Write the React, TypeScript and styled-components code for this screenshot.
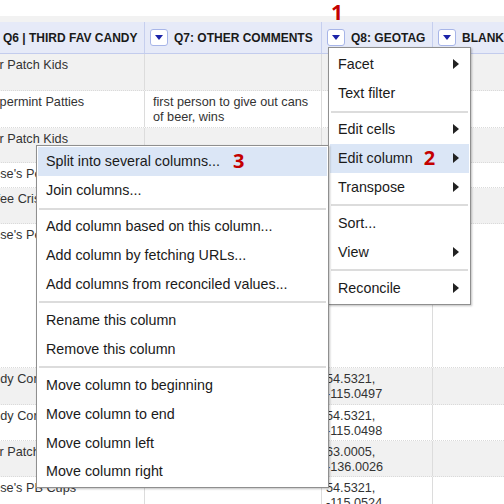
import React from "react";
import styled, { createGlobalStyle } from "styled-components";

const GlobalStyle = createGlobalStyle`
  html, body { margin: 0; padding: 0; background: #fff; }
  body { font-family: "Liberation Sans", Arial, sans-serif; overflow: hidden; }
`;

const Page = styled.div`
  position: relative;
  width: 504px;
  height: 504px;
  overflow: hidden;
  background: #fff;
`;

const TopGap = styled.div`
  height: 16px;
`;

const TopStrip = styled.div`
  height: 6px;
  background: #f2f2f2;
`;

const COLS = "171px 177px 111px 201px";

const Table = styled.div`
  margin-left: -26px;
  width: 660px;
`;

const HeaderRow = styled.div`
  display: grid;
  grid-template-columns: ${COLS};
  height: 31px;
  background: #e6eaf8;
  border-bottom: 1px solid #c3cced;
`;

const HeaderCell = styled.div`
  display: flex;
  align-items: center;
  gap: 6px;
  padding-left: 5px;
  border-right: 1px solid #c6cfee;
  overflow: hidden;
  white-space: nowrap;
`;

const DropButton = styled.span`
  flex: none;
  width: 18px;
  height: 17px;
  box-sizing: border-box;
  border: 1px solid #a7b5e8;
  border-radius: 3px;
  background: #fff;
  display: flex;
  align-items: center;
  justify-content: center;
  &::after {
    content: "";
    border-left: 4px solid transparent;
    border-right: 4px solid transparent;
    border-top: 5px solid #1b23a8;
  }
`;

const HeaderLabel = styled.span`
  font-size: 12px;
  font-weight: bold;
  color: #1a1a1a;
`;

const Row = styled.div<{ $h: number; $odd: boolean }>`
  display: grid;
  grid-template-columns: ${COLS};
  height: ${(p) => p.$h}px;
  box-sizing: border-box;
  background: ${(p) => (p.$odd ? "#f1f1f1" : "#fff")};
  border-bottom: 1px dotted #dadada;
`;

const Cell = styled.div<{ $pl: number; $pr: number }>`
  padding: 4px ${(p) => p.$pr}px 0 ${(p) => p.$pl}px;
  border-right: 1px solid #dcdcdc;
  font-size: 12.7px;
  line-height: 14.5px;
  color: #333;
  white-space: pre-line;
  overflow: hidden;
`;

const Mark = styled.span<{ $gap?: number }>`
  font-family: "Open Sans", "DejaVu Sans", sans-serif;
  font-weight: 700;
  font-size: 20px;
  line-height: 1;
  color: #c40000;
  margin-left: ${(p) => p.$gap ?? 0}px;
`;

const FloatMark = styled(Mark)`
  position: absolute;
  left: 331px;
  top: 2px;
  font-size: 21px;
`;

const Menu = styled.div<{ $left: number; $top: number; $width: number; $padTop: number }>`
  position: absolute;
  left: ${(p) => p.$left}px;
  top: ${(p) => p.$top}px;
  width: ${(p) => p.$width}px;
  box-sizing: border-box;
  background: #fff;
  border: 1px solid #8f8f8f;
  box-shadow: 1px 1px 2px rgba(0, 0, 0, 0.25);
  padding: ${(p) => p.$padTop}px 1px 1px;
  font-size: 14.3px;
  color: #1a1a1a;
`;

const Item = styled.div<{ $active?: boolean }>`
  display: flex;
  align-items: center;
  height: 28.75px;
  padding: 0 10px 0 8px;
  background: ${(p) => (p.$active ? "#dbe6f6" : "transparent")};
  white-space: nowrap;
`;

const Arrow = styled.span`
  margin-left: auto;
  width: 0;
  height: 0;
  border-left: 6px solid #222;
  border-top: 5px solid transparent;
  border-bottom: 5px solid transparent;
`;

const Sep = styled.div`
  height: 2px;
  background: #dcdcdc;
  margin: 3px 1px 2.5px;
`;

type RowData = { h: number; c1: string; c2?: string; c3?: string };

const rows: RowData[] = [
  { h: 37, c1: "Sour Patch Kids" },
  { h: 37, c1: "Peppermint Patties", c2: "first person to give out cans of beer, wins" },
  { h: 35, c1: "Sour Patch Kids" },
  { h: 25, c1: "Reese's Peanut Butter Cups" },
  { h: 36, c1: "Coffee Crisp" },
  { h: 144, c1: "Reese's Peanut Butter Cups" },
  { h: 37, c1: "Candy Corn", c3: "54.5321,\n-115.0497" },
  { h: 36, c1: "Candy Corn", c3: "54.5321,\n-115.0498" },
  { h: 36, c1: "Sour Patch Kids", c3: "63.0005,\n-136.0026" },
  { h: 36, c1: "Reese's PB Cups", c3: "54.5321,\n-115.0524" },
];

const headers = ["Q6 | THIRD FAV CANDY", "Q7: OTHER COMMENTS", "Q8: GEOTAG", "BLANK"];

type MenuEntry = { label?: string; sub?: boolean; active?: boolean; mark?: string; gap?: number; sep?: boolean };

const columnMenu: MenuEntry[] = [
  { label: "Facet", sub: true },
  { label: "Text filter" },
  { sep: true },
  { label: "Edit cells", sub: true },
  { label: "Edit column", sub: true, active: true, mark: "2", gap: 11 },
  { label: "Transpose", sub: true },
  { sep: true },
  { label: "Sort..." },
  { label: "View", sub: true },
  { sep: true },
  { label: "Reconcile", sub: true },
];

const editColumnMenu: MenuEntry[] = [
  { label: "Split into several columns...", active: true, mark: "3", gap: 13 },
  { label: "Join columns..." },
  { sep: true },
  { label: "Add column based on this column..." },
  { label: "Add column by fetching URLs..." },
  { label: "Add columns from reconciled values..." },
  { sep: true },
  { label: "Rename this column" },
  { label: "Remove this column" },
  { sep: true },
  { label: "Move column to beginning" },
  { label: "Move column to end" },
  { label: "Move column left" },
  { label: "Move column right" },
];

function MenuItems({ entries }: { entries: MenuEntry[] }) {
  return (
    <>
      {entries.map((e, i) =>
        e.sep ? (
          <Sep key={i} />
        ) : (
          <Item key={i} $active={e.active}>
            {e.label}
            {e.mark && <Mark $gap={e.gap}>{e.mark}</Mark>}
            {e.sub && <Arrow />}
          </Item>
        )
      )}
    </>
  );
}

export default function App() {
  return (
    <Page>
      <GlobalStyle />
      <TopGap />
      <TopStrip />
      <Table>
        <HeaderRow>
          {headers.map((h) => (
            <HeaderCell key={h}>
              <DropButton />
              <HeaderLabel>{h}</HeaderLabel>
            </HeaderCell>
          ))}
        </HeaderRow>
        {rows.map((r, i) => (
          <Row key={i} $h={r.h} $odd={i % 2 === 0}>
            <Cell $pl={3} $pr={4}>{r.c1}</Cell>
            <Cell $pl={8} $pr={8}>{r.c2 ?? ""}</Cell>
            <Cell $pl={4} $pr={4}>{r.c3 ?? ""}</Cell>
            <Cell $pl={4} $pr={4}></Cell>
          </Row>
        ))}
      </Table>
      <FloatMark>1</FloatMark>
      <Menu $left={328} $top={47} $width={143} $padTop={2}>
        <MenuItems entries={columnMenu} />
      </Menu>
      <Menu $left={36} $top={145} $width={293} $padTop={1}>
        <MenuItems entries={editColumnMenu} />
      </Menu>
    </Page>
  );
}
